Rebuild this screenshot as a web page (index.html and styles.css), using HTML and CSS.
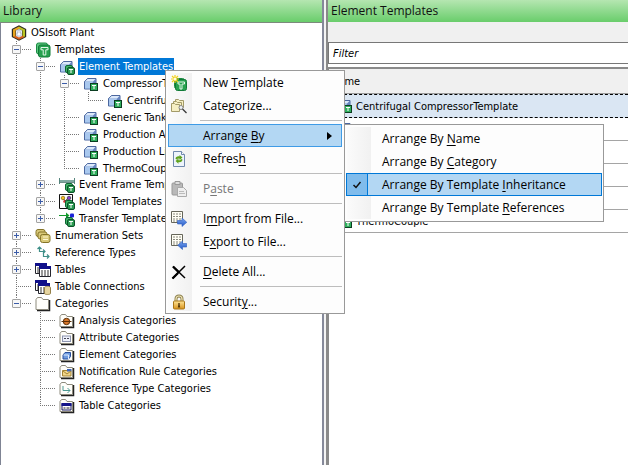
FILE: index.html
```
<!DOCTYPE html>
<html lang="en">
<head>
<meta charset="utf-8">
<title>Library</title>
<link rel="stylesheet" href="styles.css">
</head>
<body>
<svg class="sprite" aria-hidden="true">
  <defs>
    <linearGradient id="gold" x1="0" y1="0" x2="0" y2="1"><stop offset="0" stop-color="#ffe596"/><stop offset="1" stop-color="#d8921c"/></linearGradient>
    <linearGradient id="blue" x1="0" y1="0" x2="0" y2="1"><stop offset="0" stop-color="#7ba7f2"/><stop offset="1" stop-color="#2458c4"/></linearGradient>
  </defs>
  <symbol id="plant" viewBox="0 0 16 16">
    <path d="M8 .2 15.200 4v8L8 15.800.8 12V4z" fill="#2b2b22"/>
    <path d="M8 1.500 2 4.500v7L4.500 12.500V5.500L8 4z" fill="#e9a61e"/>
    <path d="M8 1.500 14 4.500v7L11.500 12.500V5.500L8 4z" fill="#b9c522"/>
    <path d="M2.500 12 8 14.700 13.500 12 11 10.500H5z" fill="#d8601c"/>
    <path d="M5 5.500 8 4l3 1.500v5.500L8 12.500 5 11z" fill="#e9edf4"/>
    <path d="M7 5h2v3h1v3H6V8h1z" fill="#fff" stroke="#7f8fa8" stroke-width=".5"/>
  </symbol>
  <symbol id="badge" viewBox="0 0 8 8">
    <path d="M0 0h8v8H0z" fill="#0b3d21"/><path d="M1 1h6v6H1z" fill="#2fae5c"/>
    <path d="M2 2h4v1H4.500v3h-1V3H2z" fill="#fff"/>
  </symbol>
  <symbol id="badges" viewBox="0 0 10 10">
    <rect x=".5" y=".5" width="7" height="7" rx="1.500" fill="#3fb566" stroke="#0c6433"/>
    <rect x="2.500" y="2.500" width="7" height="7" rx="1.500" fill="#2a9a51" stroke="#0c5229"/>
    <path d="M4 4h4v1H6.500v3h-1V5H4z" fill="#fff"/>
  </symbol>
  <symbol id="template" viewBox="0 0 16 16">
    <rect x="1.500" y="1" width="11" height="11" rx="2" fill="#5fc781" stroke="#1b8b43"/>
    <rect x="3.500" y="3" width="11.500" height="12" rx="2" fill="#27a14f" stroke="#107a37"/>
    <path d="M6 5.500h7v2.300h-2.200V13H8.200V7.800H6z" fill="none" stroke="#e4f7e9"/>
  </symbol>
  <symbol id="box" viewBox="0 0 16 16">
    <path d="M4.500 2.500h8.500v7.500l-3 3H1.500V5.500z" fill="#7e9fd4" stroke="#4c679f"/>
    <path d="M4.600 3H12.500L10 5.500H2z" fill="#dce9fa"/>
    <path d="M2 6h7.500v6.500H2z" fill="#a9c8ee"/>
    <path d="M10 6v6.500L12.800 9.500V3z" fill="#6684bd"/>
  </symbol>
  <symbol id="element" viewBox="0 0 16 16">
    <use href="#box"/><use href="#badge" x="7" y="7" width="8" height="8"/>
  </symbol>
  <symbol id="elements" viewBox="0 0 16 16">
    <use href="#box"/><use href="#badges" x="6" y="6" width="10" height="10"/>
  </symbol>
  <symbol id="event" viewBox="0 0 16 16">
    <path d="M.5 1v6M15.500 1v6" stroke="#56857d" stroke-width="1"/>
    <path d="M1 3h14v2H1z" fill="#7fa8a0"/><path d="M1 5h14v.8H1z" fill="#4c756e"/>
    <use href="#badges" x="6" y="6" width="10" height="10"/>
  </symbol>
  <symbol id="model" viewBox="0 0 16 16">
    <path d="M.5.5h13v14H.5z" fill="#fff" stroke="#111"/>
    <path d="M4 4 6 7 11 3" stroke="#333" fill="none"/>
    <circle cx="4" cy="4" r="1.800" fill="#f2c01e" stroke="#6b4e00" stroke-width=".6"/>
    <circle cx="10" cy="4" r="1.800" fill="#8a3fd0" stroke="#222" stroke-width=".6"/>
    <circle cx="5.500" cy="7.500" r="1.300" fill="#d33"/>
    <use href="#badges" x="6" y="6" width="10" height="10"/>
  </symbol>
  <symbol id="transfer" viewBox="0 0 16 16">
    <path d="M0 4h7V1.500L10.500 4.500 7 7.500V5H0z" fill="#129a2c"/>
    <rect x="11" y="2.500" width="4" height="4" rx="1" fill="#1b22d8"/>
    <use href="#badges" x="6" y="6" width="10" height="10"/>
  </symbol>
  <symbol id="enum" viewBox="0 0 16 16">
    <g fill="#d8c878" stroke="#857428">
      <rect x="1" y="1.500" width="9" height="7" rx="2"/><rect x="3" y="4" width="9" height="7" rx="2"/><rect x="5.500" y="6.500" width="9.500" height="8" rx="2"/>
    </g>
    <path d="M8 9h5M8 11.500h5" stroke="#fff8d0"/>
  </symbol>
  <symbol id="reference" viewBox="0 0 16 16">
    <path d="M4.500 2v4.500H10M8 4.500l2 2-2 2M8.500 7v4.500H14M12 9.500l2 2-2 2M2.500 4l2-2 2 2" fill="none" stroke="#3f8f88" stroke-width="1.200"/>
  </symbol>
  <symbol id="grid" viewBox="0 0 12 11">
    <path d="M.5.5h11v10H.5z" fill="#fff" stroke="#25252d"/><path d="M0 0h12v3H0z" fill="#10108a"/>
    <path d="M2 5h8M2 7h8M2 9h8" stroke="#333" stroke-dasharray="2 1"/>
  </symbol>
  <symbol id="tables" viewBox="0 0 16 16">
    <use href="#grid" x="0" y="1" width="12" height="11"/><use href="#grid" x="4" y="4" width="12" height="11"/>
  </symbol>
  <symbol id="connections" viewBox="0 0 16 16">
    <use href="#grid" x="0" y="1" width="12" height="11"/><use href="#grid" x="3" y="4" width="12" height="11"/>
    <path d="M9.500 8.500C9.500 7 15.500 7 15.500 8.500v6c0 1.300-6 1.300-6 0z" fill="#e6d5a0" stroke="#94804a"/>
  </symbol>
  <symbol id="folder" viewBox="0 0 16 16">
    <path d="M2 14.500h12.500V4" fill="none" stroke="#222" stroke-width="1.500"/>
    <path d="M1 13.500V3.500L2.500 1.500h4L8 3.500h5.500v10z" fill="#fffefa" stroke="#8d8a7c"/>
  </symbol>
  <symbol id="f-analysis" viewBox="0 0 16 16">
    <use href="#folder"/><circle cx="7.500" cy="8.500" r="3.200" fill="#d9772a" stroke="#5b2f08"/><path d="M2.500 8.500h10" stroke="#5b2f08"/>
  </symbol>
  <symbol id="f-attribute" viewBox="0 0 16 16">
    <use href="#folder"/><rect x="3.500" y="6" width="8" height="5.500" fill="#eef1fa" stroke="#8b93ad"/><path d="M5 8.500h2M8 8.500h2" stroke="#445"/>
  </symbol>
  <symbol id="f-element" viewBox="0 0 16 16">
    <use href="#folder"/><path d="M6 5.500h5.500v4l-2 2.500H4v-4z" fill="#6f9ce0" stroke="#274f9c"/><path d="M4.500 8h5v4" fill="none" stroke="#dfeafb"/>
  </symbol>
  <symbol id="f-notification" viewBox="0 0 16 16">
    <use href="#folder"/><path d="M3.500 6.500H12v5.500H3.500z" fill="#f1d68a" stroke="#a58434"/><path d="M8 5h4.500v2.500H8z" fill="#3f66b8"/><path d="M4 7l4 3 4-3" fill="none" stroke="#a58434"/>
  </symbol>
  <symbol id="f-reference" viewBox="0 0 16 16">
    <use href="#folder"/><path d="M4 5v4.500h7M8.500 7l2.500 2.500L8.500 12" fill="none" stroke="#4f9b94"/>
  </symbol>
  <symbol id="f-table" viewBox="0 0 16 16">
    <use href="#folder"/><path d="M3 5.500h9v6.500H3z" fill="#fff" stroke="#15155c"/><path d="M2.500 5h10v3h-10z" fill="#15158a"/><path d="M4.500 10h2M7.500 10h3" stroke="#222"/>
  </symbol>
  <symbol id="new" viewBox="0 0 16 16">
    <rect x="3.500" y="3.500" width="10" height="10" rx="2" fill="#5fc781" stroke="#1b8b43"/>
    <rect x="4.500" y="4.500" width="11" height="11" rx="2" fill="#27a14f" stroke="#107a37"/>
    <path d="M7 7h6.500v2H11v5H9V9H7z" fill="none" stroke="#e4f7e9"/>
    <path d="M4 0v8M0 4h8M1 1l6 6M7 1 1 7" stroke="#f3d21c" stroke-width="1.200"/><circle cx="4" cy="4" r="1.500" fill="#fffbe0"/>
  </symbol>
  <symbol id="categorize" viewBox="0 0 16 16">
    <g fill="#f6efc4" stroke="#a39a68"><path d="M4.500 1.500h3l1 1h4v7h-8z"/><path d="M2.500 3.500h3l1 1h4v7h-8z"/><path d="M.5 5.500h3l1 1h4v7h-8z"/></g>
    <circle cx="10" cy="9.500" r="2" fill="#eef3f8" stroke="#888"/><path d="M11.500 11l4 4" stroke="#333" stroke-width="1.300"/>
  </symbol>
  <symbol id="refresh" viewBox="0 0 16 16">
    <path d="M2.500.5h8l3 3v12h-11z" fill="#eef4fc" stroke="#7089ad"/><path d="M10.500.5v3h3" fill="#fff" stroke="#7089ad"/>
    <path d="M4.500 8c0-2 2-3 4-2.500V4l3 2.500L8.500 9V7.500C7 7.300 6.500 7.500 6 8.500zM11.500 8.500c0 2-2 3-4 2.500v1.700L4.500 10l3-2.500V9.200c1.500 0 2.300 0 2.500-1.200z" fill="#5fa31c"/>
  </symbol>
  <symbol id="paste" viewBox="0 0 16 16">
    <rect x="1" y="2" width="10.500" height="12" rx="1" fill="#b9b9b9" stroke="#999"/><path d="M4 .5h5v3H4z" fill="#ddd" stroke="#999"/>
    <path d="M6.500 6.500h6l3 3v6h-9z" fill="#eee" stroke="#aaa"/><path d="M8 10.500h5M8 12.500h6" stroke="#bbb"/>
  </symbol>
  <symbol id="sheet" viewBox="0 0 16 16">
    <path d="M.5.500h11v11H.5z" fill="#fffef4" stroke="#66665a"/><path d="M2 3h8M2 5.500h8M2 8h8M2 10h8" stroke="#6c6c62" stroke-width=".8" stroke-dasharray="2 1"/>
  </symbol>
  <symbol id="import" viewBox="0 0 16 16">
    <use href="#sheet"/><path d="M6.500 9.500H11V7l4.800 4.300L11 15.500v-2.500H6.500z" fill="url(#blue)" stroke="#2f5fc0" stroke-width=".6"/>
  </symbol>
  <symbol id="export" viewBox="0 0 16 16">
    <use href="#sheet"/><path d="M15.700 9.500H11.500V7L6.700 11.300l4.800 4.200v-2.500h4.200z" fill="url(#blue)" stroke="#2f5fc0" stroke-width=".6"/>
  </symbol>
  <symbol id="delete" viewBox="0 0 16 16">
    <path d="M2 2.500 14 14M14 2 1.500 14.500" stroke="#000" stroke-width="1.500"/><path d="M2 2.500 8 8.300M7 9 1.500 14.500" stroke="#000" stroke-width="2.300"/>
  </symbol>
  <symbol id="lock" viewBox="0 0 16 16">
    <path d="M5 8V5c0-4 6-4 6 0v3" fill="none" stroke="#8d8150" stroke-width="3"/><path d="M5 8V5c0-4 6-4 6 0v3" fill="none" stroke="#efe4b4" stroke-width="1.200"/>
    <rect x="2.500" y="7" width="11" height="8" rx="1" fill="url(#gold)" stroke="#a87518"/><path d="M7.300 9h1.400v2l.5 2.500H6.800l.5-2.500z" fill="#54380a"/>
  </symbol>
</svg>

<main class="window">
  <section class="pane library">
    <h1 class="title">Library</h1>
    <nav class="tree" aria-label="Library">
      <div class="node root"><svg class="icon"><use href="#plant"/></svg><span class="label">OSIsoft Plant</span></div>
      <ul class="branch">
        <li>
          <div class="node"><button class="toggle" aria-label="Collapse Templates"></button><svg class="icon"><use href="#template"/></svg><span class="label">Templates</span></div>
          <ul class="branch tight">
            <li>
              <div class="node"><button class="toggle" aria-label="Collapse Element Templates"></button><svg class="icon"><use href="#elements"/></svg><span class="label selected">Element Templates</span></div>
              <ul class="branch">
                <li>
                  <div class="node"><button class="toggle" aria-label="Collapse CompressorTemplate"></button><svg class="icon"><use href="#element"/></svg><span class="label">CompressorTemplate</span></div>
                  <ul class="branch">
                    <li><div class="node leaf"><svg class="icon"><use href="#element"/></svg><span class="label">Centrifugal CompressorTemplate</span></div></li>
                  </ul>
                </li>
                <li><div class="node leaf"><svg class="icon"><use href="#element"/></svg><span class="label">Generic TankTemplate</span></div></li>
                <li><div class="node leaf"><svg class="icon"><use href="#element"/></svg><span class="label">Production Area</span></div></li>
                <li><div class="node leaf"><svg class="icon"><use href="#element"/></svg><span class="label">Production Line</span></div></li>
                <li><div class="node leaf"><svg class="icon"><use href="#element"/></svg><span class="label">ThermoCouple</span></div></li>
              </ul>
            </li>
            <li><div class="node"><button class="toggle closed" aria-label="Expand Event Frame Templates"></button><svg class="icon"><use href="#event"/></svg><span class="label">Event Frame Templates</span></div></li>
            <li><div class="node"><button class="toggle closed" aria-label="Expand Model Templates"></button><svg class="icon"><use href="#model"/></svg><span class="label">Model Templates</span></div></li>
            <li><div class="node"><button class="toggle closed" aria-label="Expand Transfer Templates"></button><svg class="icon"><use href="#transfer"/></svg><span class="label">Transfer Templates</span></div></li>
          </ul>
        </li>
        <li><div class="node"><button class="toggle closed" aria-label="Expand Enumeration Sets"></button><svg class="icon"><use href="#enum"/></svg><span class="label">Enumeration Sets</span></div></li>
        <li><div class="node"><button class="toggle closed" aria-label="Expand Reference Types"></button><svg class="icon"><use href="#reference"/></svg><span class="label">Reference Types</span></div></li>
        <li><div class="node"><button class="toggle closed" aria-label="Expand Tables"></button><svg class="icon"><use href="#tables"/></svg><span class="label">Tables</span></div></li>
        <li><div class="node leaf"><svg class="icon"><use href="#connections"/></svg><span class="label">Table Connections</span></div></li>
        <li>
          <div class="node"><button class="toggle" aria-label="Collapse Categories"></button><svg class="icon"><use href="#folder"/></svg><span class="label">Categories</span></div>
          <ul class="branch">
            <li><div class="node leaf"><svg class="icon"><use href="#f-analysis"/></svg><span class="label">Analysis Categories</span></div></li>
            <li><div class="node leaf"><svg class="icon"><use href="#f-attribute"/></svg><span class="label">Attribute Categories</span></div></li>
            <li><div class="node leaf"><svg class="icon"><use href="#f-element"/></svg><span class="label">Element Categories</span></div></li>
            <li><div class="node leaf"><svg class="icon"><use href="#f-notification"/></svg><span class="label">Notification Rule Categories</span></div></li>
            <li><div class="node leaf"><svg class="icon"><use href="#f-reference"/></svg><span class="label">Reference Type Categories</span></div></li>
            <li><div class="node leaf"><svg class="icon"><use href="#f-table"/></svg><span class="label">Table Categories</span></div></li>
          </ul>
        </li>
      </ul>
    </nav>
  </section>

  <section class="pane elements">
    <h2 class="title">Element Templates</h2>
    <div class="toolbar"></div>
    <input class="filter" type="text" placeholder="Filter" aria-label="Filter">
    <div class="list">
      <table>
        <thead><tr><th>Name</th></tr></thead>
        <tbody>
          <tr class="current"><td><div class="cell"><svg class="icon"><use href="#element"/></svg>Centrifugal CompressorTemplate</div></td></tr>
          <tr><td><div class="cell"><svg class="icon"><use href="#element"/></svg>CompressorTemplate</div></td></tr>
          <tr><td><div class="cell"><svg class="icon"><use href="#element"/></svg>Generic TankTemplate</div></td></tr>
          <tr><td><div class="cell"><svg class="icon"><use href="#element"/></svg>Production Area</div></td></tr>
          <tr><td><div class="cell"><svg class="icon"><use href="#element"/></svg>Production Line</div></td></tr>
          <tr><td><div class="cell"><svg class="icon"><use href="#element"/></svg>ThermoCouple</div></td></tr>
        </tbody>
      </table>
    </div>
  </section>
</main>

<div class="menu context" role="menu">
  <button class="item" role="menuitem"><svg class="icon"><use href="#new"/></svg><span>New <u>T</u>emplate</span></button>
  <button class="item" role="menuitem"><svg class="icon"><use href="#categorize"/></svg><span>Cate<u>g</u>orize...</span></button>
  <hr>
  <button class="item active" role="menuitem" aria-haspopup="menu" aria-expanded="true"><span class="icon"></span><span>Arrange <u>B</u>y</span><span class="arrow"></span></button>
  <button class="item" role="menuitem"><svg class="icon"><use href="#refresh"/></svg><span>Refres<u>h</u></span></button>
  <hr>
  <button class="item" role="menuitem" disabled><svg class="icon"><use href="#paste"/></svg><span>P<u>a</u>ste</span></button>
  <hr>
  <button class="item" role="menuitem"><svg class="icon"><use href="#import"/></svg><span>I<u>m</u>port from File...</span></button>
  <button class="item" role="menuitem"><svg class="icon"><use href="#export"/></svg><span>E<u>x</u>port to File...</span></button>
  <hr>
  <button class="item" role="menuitem"><svg class="icon"><use href="#delete"/></svg><span><u>D</u>elete All...</span></button>
  <hr>
  <button class="item" role="menuitem"><svg class="icon"><use href="#lock"/></svg><span>Securit<u>y</u>...</span></button>
</div>

<div class="menu submenu" role="menu">
  <button class="item" role="menuitemradio" aria-checked="false"><span class="mark"></span><span>Arrange By <u>N</u>ame</span></button>
  <button class="item" role="menuitemradio" aria-checked="false"><span class="mark"></span><span>Arrange By <u>C</u>ategory</span></button>
  <button class="item active" role="menuitemradio" aria-checked="true"><span class="mark checked"><svg viewBox="0 0 10 10"><path d="M1.500 5 4 7.500 8.500 2" fill="none" stroke="#111" stroke-width="1.500"/></svg></span><span>Arrange By Template <u>I</u>nheritance</span></button>
  <button class="item" role="menuitemradio" aria-checked="false"><span class="mark"></span><span>Arrange By Template <u>R</u>eferences</span></button>
</div>
</body>
</html>
```
FILE: styles.css
```
* { box-sizing: border-box; }

body {
  margin: 0;
  background: #fff;
  color: #000;
  font: 11px/17px "DejaVu Sans Condensed", "DejaVu Sans", sans-serif;
}

button { font: inherit; color: inherit; }

.sprite { position: absolute; width: 0; height: 0; }

.icon { flex: none; width: 16px; height: 16px; }

/* Window and panes */
.window {
  display: grid;
  grid-template-columns: 324fr 302fr;
  gap: 2px;
  min-height: 100vh;
  background: #f4f4f4;
}

.pane {
  display: flex;
  flex-direction: column;
  min-width: 0;
  background: #fff;
}

.title {
  margin: 0;
  padding: 0 3px;
  height: 22px;
  background: linear-gradient(#b5e6b1, #69cd6b);
  font: 12px/22px "Open Sans", "Noto Sans", sans-serif;
  color: #111;
}

.library { border-right: 2px solid #85899a; }
.elements { border-left: 2px solid #8a8a8a; }

/* Tree */
.tree {
  flex: 1;
  padding-top: 1px;
  border-top: 1px solid #7c8a7c;
  border-left: 1px solid #7f8494;
  white-space: nowrap;
  overflow: hidden;
}

.branch {
  margin: 0;
  padding: 0 0 0 24px;
  list-style: none;
}

.tree > .branch { padding-left: 11px; }
.tight .branch { margin-bottom: -1px; }
.tight .branch .branch { margin-bottom: 0; }

.branch > li { position: relative; }

.branch > li::before {
  content: "";
  position: absolute;
  top: 0;
  bottom: 0;
  left: 4px;
  width: 1px;
  background: repeating-linear-gradient(#777 0 1px, transparent 1px 2px);
}

.branch > li:last-child::before { bottom: auto; height: 9px; }

.node {
  position: relative;
  display: flex;
  align-items: center;
  height: 17px;
  padding-left: 23px;
}

.node.root { padding-left: 10px; }

.branch .node::before {
  content: "";
  position: absolute;
  top: 8px;
  left: 4px;
  width: 15px;
  height: 1px;
  background: repeating-linear-gradient(90deg, #777 0 1px, transparent 1px 2px);
}

.toggle {
  position: absolute;
  top: 4px;
  left: 0;
  width: 9px;
  height: 9px;
  padding: 0;
  border: 1px solid #a3a3a3;
  border-radius: 1px;
  background: linear-gradient(#3b5ca8, #3b5ca8) center / 5px 1px no-repeat #f7f7f7;
}

.toggle.closed {
  background:
    linear-gradient(#3b5ca8, #3b5ca8) center / 5px 1px no-repeat,
    linear-gradient(#3b5ca8, #3b5ca8) center / 1px 5px no-repeat,
    #f7f7f7;
}

.label { margin-left: 3px; padding: 0 1px; }
.label.selected { background: #0078d7; color: #fff; }

/* Element list */
.toolbar { height: 20px; background: #f0f0f0; }

.filter {
  width: 100%;
  height: 22px;
  padding: 0 4px;
  border: 1px solid #777;
  border-right: 0;
  border-radius: 0;
  background: #fff;
  font: italic 11px/20px "DejaVu Sans Condensed", "DejaVu Sans", sans-serif;
}

.filter::placeholder { color: #000; opacity: 1; }

.list {
  flex: 1;
  margin-top: 3px;
  border-top: 2px solid #8a8a8a;
  border-left: 1px solid #8a8a8a;
}

.list table { width: 100%; border-collapse: separate; border-spacing: 0; }

.list th {
  height: 25px;
  padding: 0 2px;
  border-bottom: 1px solid #999;
  background: #f0f0f0;
  font-weight: normal;
  text-align: left;
}

.list td { height: 23px; padding: 0 0 0 8px; border-bottom: 1px solid #a5a5a5; }

.current td {
  height: 24px;
  border-top: 1px dashed #000;
  border-bottom: 1px dashed #000;
  background: #dae6f3;
}

.cell { display: flex; align-items: center; gap: 3px; }

/* Menus */
.menu {
  position: absolute;
  border: 1px solid #999;
  background: linear-gradient(90deg, #fbfbfb, #f1f1f1) 2px 2px / 24px calc(100% - 4px) no-repeat #fdfdfd;
  font: 12px/23px "Open Sans", "Noto Sans", sans-serif;
}

.context { top: 70px; left: 165px; width: 180px; padding: 0 2px; }
.submenu { top: 124px; left: 344px; width: 260px; padding: 2px 1px; }

.menu hr {
  height: 1px;
  margin: 3px 0 3px 32px;
  border: 0;
  background: #bdbdbd;
}

.item {
  display: flex;
  align-items: center;
  width: 100%;
  height: 23px;
  padding: 0;
  border: 1px solid transparent;
  background: none;
  text-align: left;
  white-space: nowrap;
}

.item u { text-underline-offset: 2px; }
.context .icon { margin: 0 16px 0 2px; }
.item:disabled { color: #777; }
.item.active { border-color: #3f9be6; background: #b3d7f3; }
.submenu .item.active { border-color: #0078d7; }

.arrow {
  margin-left: auto;
  margin-right: 9px;
  border: 4px solid transparent;
  border-left: 5px solid #000;
  border-right: 0;
}

.mark {
  display: grid;
  place-items: center;
  flex: none;
  width: 21px;
  height: 21px;
  margin-right: 14px;
}

.mark.checked { background: #80bcec; border-right: 1px solid #0078d7; }
.mark svg { width: 10px; height: 10px; }
```
